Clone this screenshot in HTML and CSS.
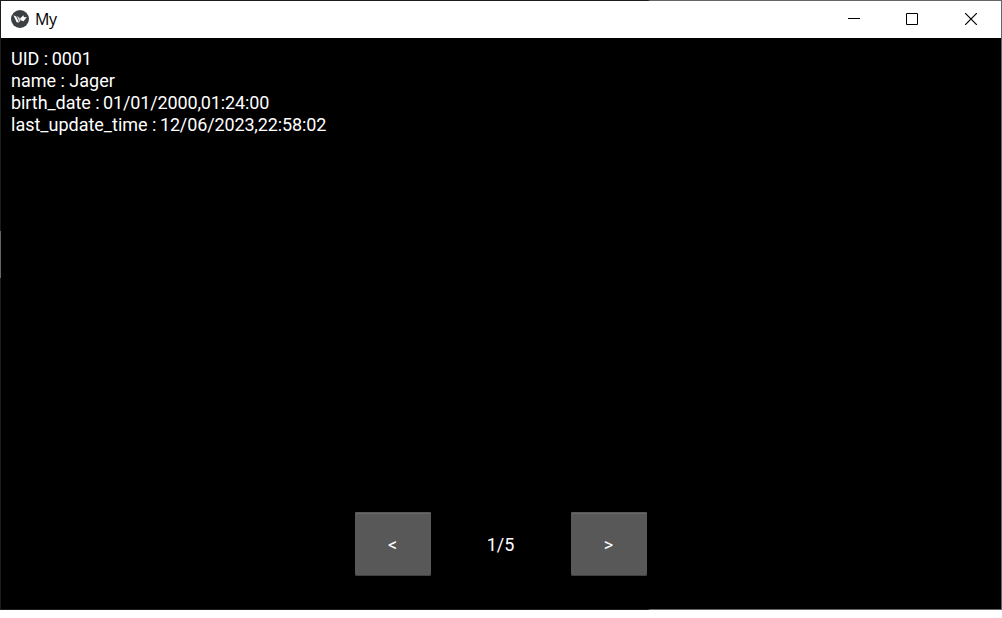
FILE: index.html
```html
<!DOCTYPE html>
<html lang="en">
<head>
<meta charset="utf-8">
<title>My</title>
<link rel="stylesheet" href="styles.css">
</head>
<body>
<div class="window">
  <header class="titlebar">
    <svg class="logo" width="18" height="18" viewBox="0 0 18 18">
      <circle cx="9" cy="9" r="9" fill="#3d4043"/>
      <path d="M2.5 5.3 L5.2 6.5 L8 12.4 L5.6 12.2Z" fill="#fff"/>
      <path d="M5.9 6 L8.3 7.4 L9.7 10 L8.3 12.2Z" fill="#d4d4d4"/>
      <path d="M9 8.4 L12.5 5.2 L12.9 7.2 L15.8 7 L12.6 11.2 L10.2 10.6Z" fill="#fff"/>
    </svg>
    <h1 class="title">My</h1>
    <div class="controls">
      <svg width="12" height="12" viewBox="0 0 12 12"><path d="M0 5.5H12"/></svg>
      <svg width="12" height="12" viewBox="0 0 12 12"><path d="M.5 .5H11.5V11.5H.5Z"/></svg>
      <svg class="close" width="12" height="12" viewBox="0 0 12 12"><path d="M0 0L12 12M12 0L0 12"/></svg>
    </div>
  </header>
  <main class="content">
    <div class="record">
      <div>UID : <span class="value">0001</span></div>
      <div>name : Jager</div>
      <div><span class="birth-label">birth_date :</span> <span class="value">01/01/2000,01:24:00</span></div>
      <div>last_update_time : <span class="value">12/06/2023,22:58:02</span></div>
    </div>
    <nav class="pager">
      <button class="page-button">&lt;</button>
      <span class="page-count">1/5</span>
      <button class="page-button">&gt;</button>
    </nav>
  </main>
</div>
</body>
</html>
```
FILE: styles.css
```css
* { box-sizing: border-box; }
body { margin: 0; background: #fff; }
.window {
  width: 1002px;
  height: 610px;
  padding: 1px;
  display: flex;
  flex-direction: column;
  background:
    linear-gradient(#666, #666) 0 231px / 1px 47px no-repeat,
    linear-gradient(#666, #666) 100% 0 / 1px 100% no-repeat,
    linear-gradient(90deg, #1c1c1c 648px, #666 650px);
}
.titlebar {
  height: 37px;
  flex: none;
  display: flex;
  align-items: center;
  padding: 0 24px 1px 10px;
  background: #fff;
}
.logo { display: block; }
.title {
  margin: 0 0 0 6px;
  font: 400 16px/20px "Open Sans", "Noto Sans", sans-serif;
  letter-spacing: -0.3px;
  color: #000;
}
.controls { display: flex; gap: 46px; margin-left: auto; }
.controls svg { display: block; fill: none; stroke: #000; stroke-width: 1; }
.controls .close { margin-left: 1px; stroke-width: 1.2; }
.content {
  flex: 1;
  display: flex;
  flex-direction: column;
  justify-content: space-between;
  padding: 10px 10px 33px;
  background: #000;
  color: #fff;
  font: 400 18px/22px Roboto, sans-serif;
}
.birth-label { letter-spacing: -0.06px; }
.value { margin-left: -1px; letter-spacing: -0.13px; }
.pager { display: flex; justify-content: center; height: 64px; }
.page-button {
  width: 76px;
  padding: 2px 1px 0 0;
  border: 0;
  border-radius: 2px;
  background: #585858;
  box-shadow: inset 0 1px #585858, inset 0 2px #686868, inset 0 -1px #404040;
  color: #fff;
  font: 400 18px/22px Roboto, sans-serif;
}
.page-count { width: 140px; padding-right: 1px; line-height: 65px; text-align: center; }
```
